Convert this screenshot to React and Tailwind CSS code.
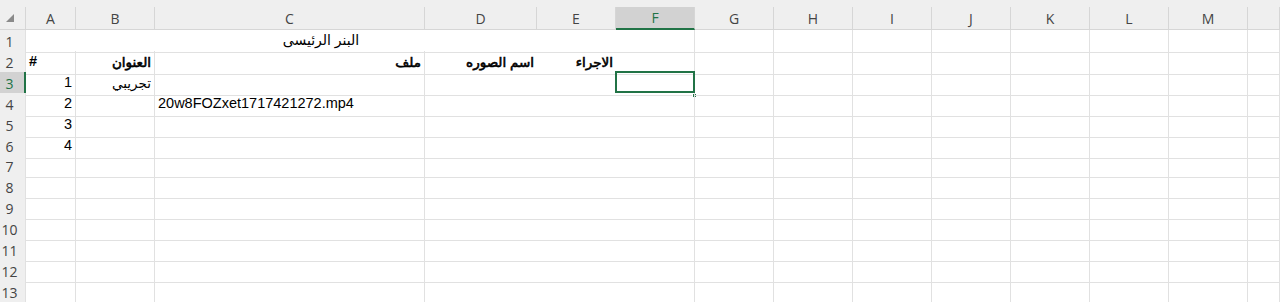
// App.jsx — Excel-like sheet view
const COLS = ['A', 'B', 'C', 'D', 'E', 'F', 'G', 'H', 'I', 'J', 'K', 'L', 'M', ''];
const GRID = 'grid grid-cols-[26px_50px_79px_270px_112px_79px_79px_79px_79px_79px_79px_79px_79px_79px_1fr]';
const FONT = { fontFamily: '"Liberation Sans", "DejaVu Sans", sans-serif' };

// ar: arabic text (smaller, faux-bold via stroke)
const ROWS = {
  2: {
    0: { t: '#', bold: true, align: 'left' },
    1: { t: 'العنوان', ar: true, bold: true },
    2: { t: 'ملف', ar: true, bold: true },
    3: { t: 'اسم الصوره', ar: true, bold: true },
    4: { t: 'الاجراء', ar: true, bold: true },
  },
  3: { 0: { t: '1' }, 1: { t: 'تجريبي', ar: true } },
  4: { 0: { t: '2' }, 2: { t: '20w8FOZxet1717421272.mp4', align: 'left' } },
  5: { 0: { t: '3' } },
  6: { 0: { t: '4' } },
};

function HeaderRow() {
  return (
    <div className={`${GRID} h-[30px] bg-[#efefef] border-b border-[#d6d6d6] text-[#444] text-[14px]`} style={{ fontFamily: '"Open Sans", sans-serif' }}>
      <div className="relative border-r border-[#d6d6d6] mt-[7px]">
        <span className="absolute left-[6px] top-[7px] w-0 h-0 border-l-[8px] border-l-transparent border-b-[8px] border-b-[#8a8a8a]" />
      </div>
      {COLS.map((c, i) => (
        <div
          key={i}
          className={`mt-[7px] flex items-center justify-center border-r border-[#d6d6d6] ${
            c === 'F' ? 'bg-[#d2d2d2] text-[#217346] border-b-2 border-b-[#217346] -mb-px' : ''
          }`}
        >
          {c}
        </div>
      ))}
    </div>
  );
}

function Row({ n }) {
  const data = ROWS[n] || {};
  const active = n === 3;
  return (
    <div className={`${GRID} h-[21px] text-[14.5px] text-black`} style={FONT}>
      <div
        className={`flex items-center justify-start pl-[1px] text-[14px] border-b border-[#e1e1e1] ${
          active ? 'bg-[#d2d2d2] text-[#217346] border-r-2 border-r-[#217346]' : 'bg-[#efefef] text-[#444] border-r border-[#d6d6d6]'
        }`}
        style={{ fontFamily: '"Open Sans", sans-serif' }}
      >
        <span className="w-[17px] text-center">{n}</span>
      </div>
      {n === 1 ? (
        <>
          <div className="col-span-6 flex items-end justify-center pr-[78px] pb-[1px] text-[14px] border-r border-b border-[#e1e1e1]">
            البنر الرئيسى
          </div>
          {COLS.slice(6).map((c, i) => (
            <div key={i} className="border-r border-b border-[#e1e1e1]" />
          ))}
        </>
      ) : (
        COLS.map((c, i) => {
          const cell = data[i];
          const sel = active && c === 'F';
          const noRight = c === 'D' || c === 'E';
          return (
            <div
              key={i}
              className={`relative flex items-end pb-[1px] px-[3px] whitespace-nowrap border-b border-[#e1e1e1] ${
                noRight ? '' : 'border-r'
              } ${cell && cell.align === 'left' ? 'justify-start' : 'justify-end'} ${
                cell && cell.bold && !cell.ar ? 'font-bold' : ''
              } ${cell && cell.ar ? 'text-[13.5px]' : ''} ${
                cell && cell.ar && cell.bold ? '[-webkit-text-stroke:0.6px_black]' : ''
              }`}
            >
              {cell && cell.t}
              {sel && (
                <>
                  <span className="absolute -left-px -top-px w-[80px] h-[22px] border-2 border-[#217346]" />
                  <span className="absolute -right-[3px] -bottom-[3px] w-[5px] h-[5px] bg-[#217346] border border-white" />
                </>
              )}
            </div>
          );
        })
      )}
    </div>
  );
}

export default function App() {
  return (
    <div className="w-[1280px] h-[302px] overflow-hidden bg-white">
      <HeaderRow />
      {Array.from({ length: 13 }, (_, i) => (
        <Row key={i} n={i + 1} />
      ))}
    </div>
  );
}
